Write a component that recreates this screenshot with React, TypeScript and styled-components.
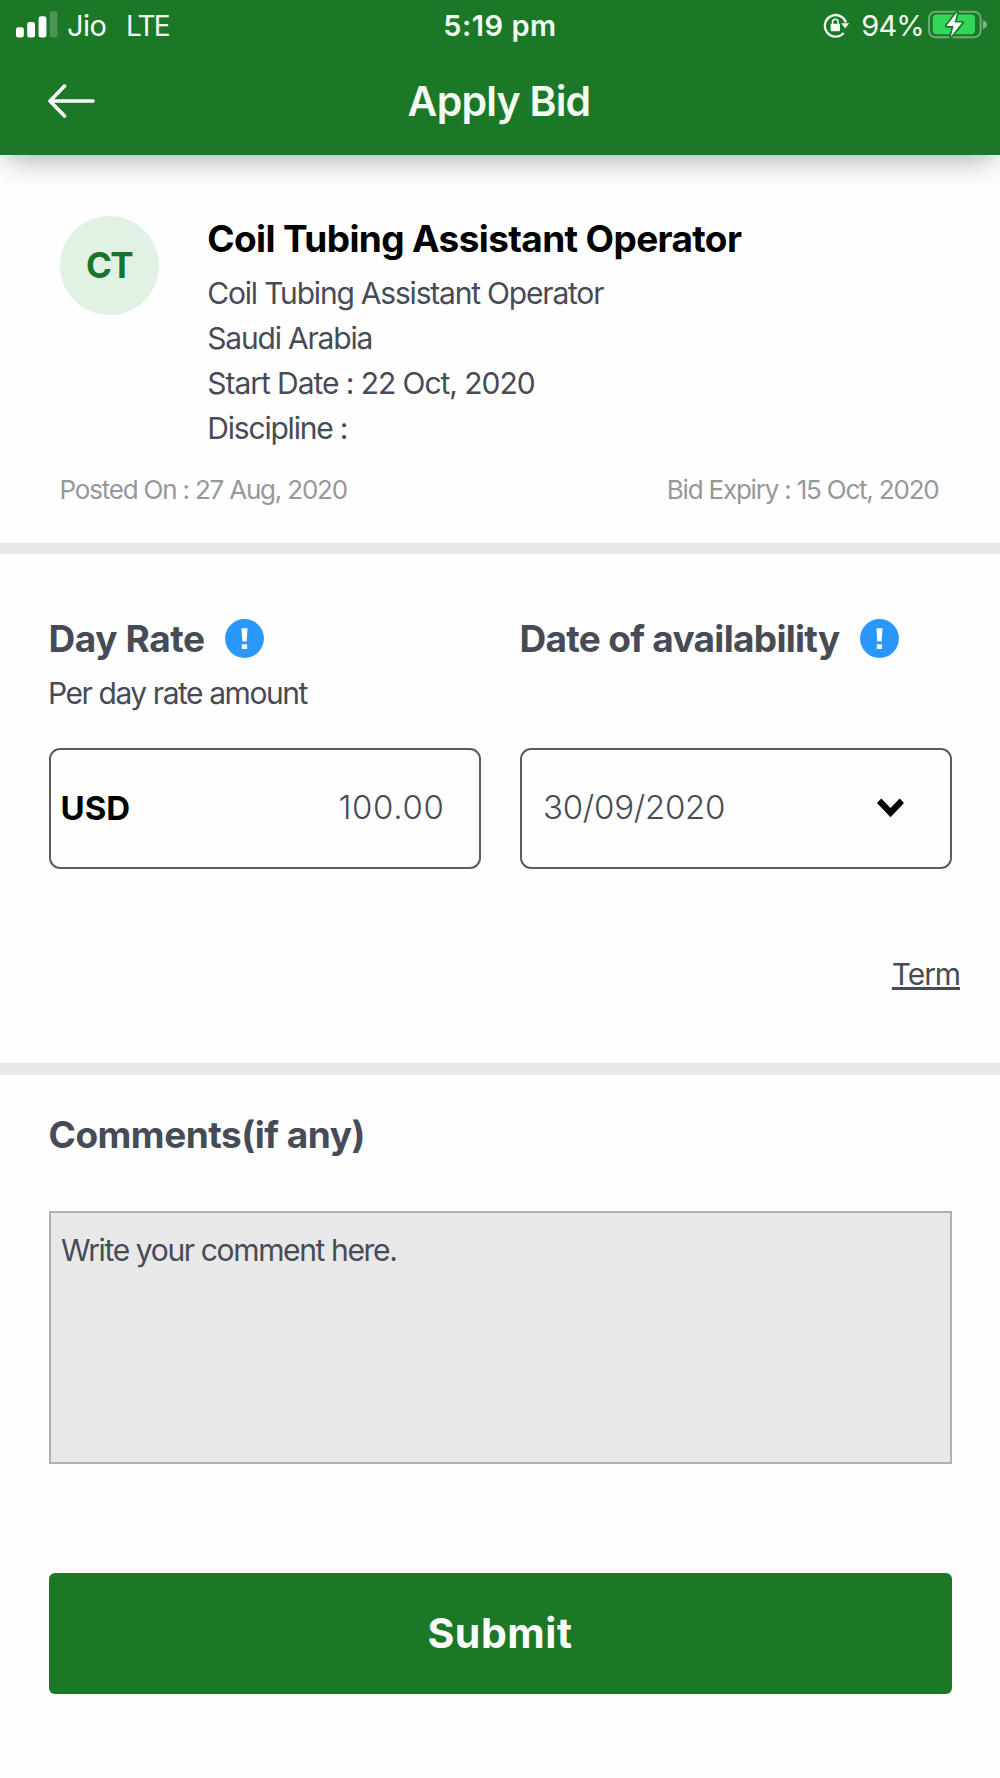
import React from 'react';
import styled, { createGlobalStyle } from 'styled-components';

const GREEN = '#1b7827';
const SLATE = '#474b56';

const GlobalStyle = createGlobalStyle`
  *, *::before, *::after { box-sizing: border-box; }
  body {
    margin: 0;
    background: #fefefe;
    font-family: "Inter", "Liberation Sans", sans-serif;
  }
  h1, h2, p { margin: 0; }
  svg { display: block; flex: none; }
`;

const Screen = styled.div`
  width: 1000px;
  height: 1778px;
  overflow: hidden;
  background: #fefefe;
`;

const Header = styled.header`
  position: relative;
  height: 155px;
  background: ${GREEN};
  color: #f4fbf2;
  box-shadow: 0 11px 26px -6px rgba(22, 26, 34, 0.34);
`;

const StatusBar = styled.div`
  display: grid;
  grid-template-columns: 1fr auto 1fr;
  height: 51px;
  padding: 0 13px 0 16px;
  font-size: 29px;
  line-height: 51px;
  white-space: nowrap;
`;

const StatusLeft = styled.div`
  display: flex;
`;

const StatusRight = styled.div`
  display: flex;
  justify-content: flex-end;
`;

const Carrier = styled.span`
  width: 59px;
  margin-left: 9px;
  letter-spacing: -0.5px;
`;

const Network = styled.span`
  font-size: 28px;
  line-height: 52px;
  letter-spacing: -1.7px;
`;

const Clock = styled.span`
  font-weight: 600;
  letter-spacing: 0.5px;
  padding-right: 3px;
`;

const Charge = styled.span`
  margin: 0 4px 0 11.5px;
  letter-spacing: -0.8px;
`;

const TitleBar = styled.div`
  display: grid;
  grid-template-columns: 1fr auto 1fr;
  align-items: center;
  height: 99px;
  padding: 0 50px 0 48px;
`;

const BackButton = styled.button`
  justify-self: start;
  padding: 0;
  border: 0;
  background: none;
  color: #fff;
`;

const ScreenTitle = styled.h1`
  font-size: 41px;
  font-weight: 600;
  line-height: 98px;
  letter-spacing: -0.79px;
`;

const Divider = styled.div<{ $size: number }>`
  height: ${(p) => p.$size}px;
  background: #e8e8e8;
`;

const JobSection = styled.section`
  height: 388px;
  padding: 60.5px 61.5px 0 59.5px;
`;

const JobSummary = styled.div`
  display: flex;
  gap: 48.3px;
`;

const Avatar = styled.div`
  display: flex;
  align-items: center;
  justify-content: center;
  width: 99px;
  height: 99px;
  margin-left: 0.5px;
  padding: 0 1px 0 0;
  border-radius: 50%;
  background: #e1f1e4;
  color: #18742a;
  font-size: 35px;
  font-weight: 700;
  letter-spacing: -1.6px;
`;

const JobTitle = styled.h2`
  margin: 0.5px 0 10px;
  font-size: 37px;
  font-weight: 700;
  line-height: 45px;
  letter-spacing: -0.64px;
`;

const JobLine = styled.p<{ $spacing: number }>`
  color: ${SLATE};
  font-size: 30px;
  line-height: 45px;
  letter-spacing: ${(p) => p.$spacing}px;
`;

const JobMeta = styled.div`
  display: flex;
  justify-content: space-between;
  margin-top: 23px;
  color: #97989b;
  font-size: 26px;
  line-height: 32px;
  letter-spacing: -1.2px;
`;

const RateSection = styled.section`
  height: 509px;
  padding: 62px 49px 0 48.5px;
`;

const Fields = styled.div`
  display: grid;
  grid-template-columns: 432px 432px;
  column-gap: 39px;
`;

const Field = styled.div`
  display: flex;
  flex-direction: column;
`;

const Label = styled.h2<{ $spacing: number }>`
  display: flex;
  align-items: center;
  gap: 20.5px;
  color: ${SLATE};
  font-size: 37px;
  font-weight: 700;
  line-height: 46px;
  letter-spacing: ${(p) => p.$spacing}px;

  svg {
    margin-top: -2px;
  }
`;

const Hint = styled.p`
  height: 40px;
  margin: 11px 0 34.5px -0.5px;
  color: ${SLATE};
  font-size: 30px;
  line-height: 40px;
  letter-spacing: -1.44px;
`;

const InputBox = styled.div<{ $left: number; $right: number }>`
  display: flex;
  align-items: center;
  justify-content: space-between;
  height: 121px;
  padding: 0 ${(p) => p.$right}px 0 ${(p) => p.$left}px;
  border: 2px solid #5c5c67;
  border-radius: 11px;
`;

const Currency = styled.span`
  font-size: 33px;
  font-weight: 700;
  letter-spacing: 0;
  color: #000;
`;

const Value = styled.span<{ $spacing: number }>`
  padding-bottom: 3px;
  color: ${SLATE};
  font-size: 33px;
  font-weight: 300;
  letter-spacing: ${(p) => p.$spacing}px;
`;

const TermLink = styled.a`
  display: block;
  width: fit-content;
  margin: 85.5px -9px 0 auto;
  color: ${SLATE};
  font-size: 30px;
  line-height: 40px;
  letter-spacing: -1.1px;
  text-decoration: underline;
  text-decoration-thickness: 3px;
  text-decoration-skip-ink: none;
  text-underline-offset: 2px;
`;

const CommentSection = styled.section`
  padding: 37px 48.5px 0;
`;

const CommentBox = styled.div`
  height: 253px;
  margin-top: 53px;
  padding: 17px 10.5px;
  border: 2px solid #b0b1b4;
  background: #e8e8e8;
  color: ${SLATE};
  font-size: 30px;
  line-height: 40px;
  letter-spacing: -1.36px;
`;

const SubmitButton = styled.button`
  display: block;
  width: 100%;
  height: 121px;
  margin-top: 108.5px;
  padding: 0;
  border: 0;
  border-radius: 6px;
  background: ${GREEN};
  color: #fbfefa;
  font-family: inherit;
  font-size: 41px;
  font-weight: 700;
  letter-spacing: 0.57px;
`;

const SignalIcon = () => (
  <svg width="42" height="51" viewBox="0 0 42 51" fill="#fff">
    <rect x="0" y="27.2" width="7.8" height="10.4" rx="2.4" />
    <rect x="11.2" y="22" width="7.8" height="15.6" rx="2.4" />
    <rect x="22.6" y="16.3" width="7.8" height="21.3" rx="2.4" />
    <rect x="33.8" y="11.3" width="7.6" height="26.3" rx="2.4" opacity="0.22" />
  </svg>
);

const RotationLockIcon = () => (
  <svg width="27" height="51" viewBox="0 0 27 51" fill="none" stroke="#f4fbf2">
    <path d="M20.7 33.1A10.8 10.8 0 1 1 22.9 22.4" strokeWidth="2.3" />
    <path d="M18.2 23.2h8l-4 5.2z" fill="#f4fbf2" stroke="none" />
    <rect x="7.6" y="23.8" width="9.4" height="7.4" rx="1" fill="#f4fbf2" stroke="none" />
    <path d="M9.5 24v-2a2.8 2.8 0 0 1 5.6 0v2" strokeWidth="1.5" />
  </svg>
);

const BatteryIcon = () => (
  <svg width="59" height="51" viewBox="0 0 59 51">
    <rect x="1" y="11.7" width="51.6" height="25.6" rx="6.5" fill="none" stroke="#fff" strokeOpacity="0.38" strokeWidth="2" />
    <path d="M54.8 20.2c3 .8 4.2 2.5 4.2 4.4s-1.2 3.6-4.2 4.4z" fill="#fff" fillOpacity="0.45" />
    <rect x="4.8" y="14.6" width="42.2" height="19.6" rx="3.6" fill="#32d759" />
    <path
      d="M29.2 12 18.4 26h7.2L22.800 36.800 34.200 22.600h-7.600z"
      fill="#fff"
      stroke={GREEN}
      strokeWidth="3.4"
      strokeLinejoin="round"
      paintOrder="stroke"
    />
  </svg>
);

const BackIcon = () => (
  <svg width="48" height="36" viewBox="0 0 48 36" fill="none" stroke="currentColor" strokeWidth="3.6" strokeLinecap="round" strokeLinejoin="round">
    <path d="M45 18H2M16.500 3 2 18 16.500 33" />
  </svg>
);

const InfoIcon = () => (
  <svg width="39" height="39" viewBox="0 0 39 39">
    <circle cx="19.5" cy="19.5" r="19.4" fill="#2997fb" />
    <path d="M16.4 9.3h6.1l-.9 13.2h-4.3z" fill="#fff" />
    <rect x="16.8" y="25.3" width="5.3" height="4.7" rx="0.5" fill="#fff" />
  </svg>
);

const ChevronIcon = () => (
  <svg width="27" height="20" viewBox="0 0 27 20">
    <path d="M4.3 0.6 13.5 9.9 22.7 0.6 27 5 13.5 19.2 0 5z" fill="#000" />
  </svg>
);

export default function App() {
  return (
    <Screen>
      <GlobalStyle />
      <Header>
        <StatusBar>
          <StatusLeft>
            <SignalIcon />
            <Carrier>Jio</Carrier>
            <Network>LTE</Network>
          </StatusLeft>
          <Clock>5:19 pm</Clock>
          <StatusRight>
            <RotationLockIcon />
            <Charge>94%</Charge>
            <BatteryIcon />
          </StatusRight>
        </StatusBar>
        <TitleBar>
          <BackButton aria-label="Back">
            <BackIcon />
          </BackButton>
          <ScreenTitle>Apply Bid</ScreenTitle>
        </TitleBar>
      </Header>

      <JobSection>
        <JobSummary>
          <Avatar>CT</Avatar>
          <div>
            <JobTitle>Coil Tubing Assistant Operator</JobTitle>
            <JobLine $spacing={-1.2}>Coil Tubing Assistant Operator</JobLine>
            <JobLine $spacing={-1.2}>Saudi Arabia</JobLine>
            <JobLine $spacing={-1.05}>Start Date : 22 Oct, 2020</JobLine>
            <JobLine $spacing={-1.2}>Discipline :</JobLine>
          </div>
        </JobSummary>
        <JobMeta>
          <span>Posted On : 27 Aug, 2020</span>
          <span>Bid Expiry : 15 Oct, 2020</span>
        </JobMeta>
      </JobSection>

      <Divider $size={11} />

      <RateSection>
        <Fields>
          <Field>
            <Label $spacing={-0.41}>
              Day Rate
              <InfoIcon />
            </Label>
            <Hint>Per day rate amount</Hint>
            <InputBox $left={10} $right={34}>
              <Currency>USD</Currency>
              <Value $spacing={0.65}>100.00</Value>
            </InputBox>
          </Field>
          <Field>
            <Label $spacing={-0.7}>
              Date of availability
              <InfoIcon />
            </Label>
            <Hint />
            <InputBox $left={21.5} $right={45.5}>
              <Value $spacing={-0.28}>30/09/2020</Value>
              <ChevronIcon />
            </InputBox>
          </Field>
        </Fields>
        <TermLink>Term</TermLink>
      </RateSection>

      <Divider $size={12} />

      <CommentSection>
        <Label $spacing={-0.49}>Comments(if any)</Label>
        <CommentBox>Write your comment here.</CommentBox>
        <SubmitButton>Submit</SubmitButton>
      </CommentSection>
    </Screen>
  );
}
